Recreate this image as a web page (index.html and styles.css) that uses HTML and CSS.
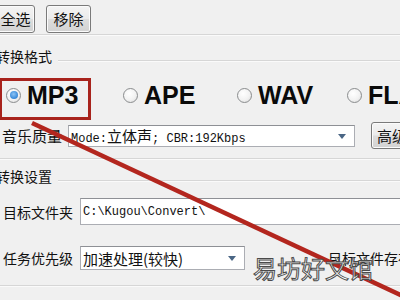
FILE: index.html
```html
<!DOCTYPE html>
<html>
<head>
<meta charset="utf-8">
<link rel="stylesheet" href="styles.css">
</head>
<body>
<div class="win">
  <div class="toolbar">
    <button class="btn btn-all">全选</button>
    <button class="btn btn-del">移除</button>
  </div>

  <div class="group">
    <div class="ghead"><span class="glabel">转换格式</span><span class="gline"></span></div>
    <div class="radios">
      <label class="radio on"><span class="circle"><span class="dot"></span></span>MP3</label>
      <label class="radio"><span class="circle"></span>APE</label>
      <label class="radio"><span class="circle"></span>WAV</label>
      <label class="radio"><span class="circle"></span>FLAC</label>
    </div>
    <div class="row row-q">
      <span class="lbl lbl-q">音乐质量</span>
      <div class="field select sel-q"><span class="mono">Mode:<span class="cjk">立体声</span>; CBR:192Kbps</span><span class="arrow"></span></div>
      <button class="btn btn-adv">高级</button>
    </div>
  </div>

  <div class="group">
    <div class="ghead ghead2"><span class="glabel">转换设置</span><span class="gline"></span></div>
    <div class="row row-dir">
      <span class="lbl">目标文件夹</span>
      <div class="field input-dir"><span class="mono">C:\Kugou\Convert\</span></div>
    </div>
    <div class="row row-pri">
      <span class="lbl">任务优先级</span>
      <div class="field select sel-pri"><span class="cjk-val">加速处理(较快)</span><span class="arrow"></span></div>
      <span class="lbl lbl-exist">目标文件存在</span>
    </div>
  </div>

  <div class="redbox"></div>
  <svg class="redline" width="400" height="300" viewBox="0 0 400 300">
    <line x1="32" y1="123" x2="420" y2="304" stroke="#b3261e" stroke-width="4.5"/>
  </svg>
  <div class="watermark">易坊好文馆</div>
</div>
</body>
</html>
```

FILE: styles.css
```css
html, body {
  margin: 0;
  padding: 0;
}
body {
  width: 400px;
  height: 300px;
  overflow: hidden;
  background: #f0f0f0;
  font-family: "Noto Sans CJK SC", "Liberation Sans", sans-serif;
  color: #111;
}
.win {
  position: relative;
  width: 400px;
  height: 300px;
  overflow: hidden;
}
.toolbar {
  height: 35px;
  display: flex;
  align-items: flex-start;
  padding-top: 5px;
  box-sizing: border-box;
  border-bottom: 1px solid #d6d6d6;
  box-shadow: 0 1px 0 #fafafa;
}
.btn {
  font-family: "Noto Sans CJK SC", sans-serif;
  font-size: 15px;
  line-height: 18px;
  color: #111;
  height: 28px;
  padding: 0;
  border: 1px solid #7a7a7a;
  border-radius: 3px;
  background: linear-gradient(#f4f4f4 0%, #ebebeb 48%, #dddddd 52%, #d2d2d2 100%);
  box-shadow: inset 0 0 0 1px #fbfbfb;
  flex: none;
}
.btn-all {
  margin-left: -16px;
  width: 51px;
  padding-left: 12px;
}
.btn-del {
  margin-left: 11px;
  width: 45px;
}
.group {
  border-bottom: 1px solid #d6d6d6;
  box-shadow: 0 1px 0 #fafafa;
}
.ghead {
  display: flex;
  height: 20px;
  margin-top: 11px;
}
.glabel {
  font-size: 14px;
  line-height: 20px;
  margin-left: -4px;
  white-space: nowrap;
}
.gline {
  flex: 1;
  align-self: flex-start;
  margin-top: 14px;
  margin-left: 6px;
  border-top: 1px solid #d6d6d6;
  box-shadow: 0 1px 0 #fafafa;
}
.radios {
  display: grid;
  grid-template-columns: 117px 114px 110px 100px;
  padding-left: 6px;
  height: 56px;
  padding-top: 2px;
  box-sizing: border-box;
  align-items: center;
}
.radio {
  display: flex;
  align-items: center;
  font-family: "Liberation Sans", Arial, sans-serif;
  font-weight: bold;
  font-size: 25px;
  line-height: 30px;
  color: #0a0a0a;
  white-space: nowrap;
}
.circle {
  width: 13px;
  height: 13px;
  border: 1px solid #8a8c8e;
  border-radius: 50%;
  background: radial-gradient(circle at 40% 35%, #ffffff 0%, #f2f2f2 55%, #d8d8d8 100%);
  margin-right: 6px;
  display: flex;
  align-items: center;
  justify-content: center;
  flex: none;
}
.dot {
  width: 8px;
  height: 8px;
  border-radius: 50%;
  background: radial-gradient(circle at 45% 40%, #8cc3f5 0%, #3f8fdc 60%, #2a74c4 100%);
}
.row {
  display: flex;
  align-items: center;
}
.row-q {
  height: 27px;
  margin-bottom: 9px;
}
.lbl {
  font-size: 14px;
  line-height: 20px;
  white-space: nowrap;
  margin-left: 3px;
  flex: none;
}
.lbl-q {
  font-size: 15px;
  margin-left: 2px;
}
.field {
  background: #ffffff;
  border: 1px solid #abadb3;
  border-top-color: #8e9095;
  box-sizing: border-box;
  display: flex;
  align-items: center;
  position: relative;
  flex: none;
}
.mono {
  font-family: "Liberation Mono", "Noto Sans CJK SC", monospace;
  font-size: 12px;
  color: #111;
  white-space: nowrap;
  padding-left: 2px;
}
.cjk {
  font-family: "Noto Sans CJK SC", sans-serif;
  font-size: 15px;
}
.sel-q {
  margin-left: 6px;
  width: 287px;
  height: 22px;
}
.arrow {
  position: absolute;
  right: 8px;
  top: 50%;
  margin-top: -2px;
  width: 0;
  height: 0;
  border-left: 4px solid transparent;
  border-right: 4px solid transparent;
  border-top: 5px solid #4a6685;
}
.btn-adv {
  margin-left: 16px;
  width: 60px;
  height: 27px;
  text-align: left;
  padding-left: 5px;
}
.ghead2 {
  margin-top: 7px;
}
.row-dir {
  margin-top: 12px;
  height: 27px;
}
.input-dir {
  margin-left: 7px;
  width: 330px;
  height: 27px;
}
.row-pri {
  margin-top: 21px;
  height: 24px;
  margin-bottom: 15px;
}
.sel-pri {
  margin-left: 7px;
  width: 165px;
  height: 24px;
}
.cjk-val {
  font-size: 15px;
  padding-left: 2px;
  white-space: nowrap;
}
.lbl-exist {
  margin-left: 83px;
  font-size: 14px;
}
.redbox {
  position: absolute;
  left: -1px;
  top: 78px;
  width: 92px;
  height: 42px;
  box-sizing: border-box;
  border: 3px solid #a8231c;
}
.redline {
  position: absolute;
  left: 0;
  top: 0;
}
.watermark {
  position: absolute;
  left: 253px;
  top: 250px;
  font-family: "Noto Sans CJK SC", sans-serif;
  font-size: 24px;
  line-height: 36px;
  color: #ffffff;
  -webkit-text-stroke: 1px #4a4a4a;
  white-space: nowrap;
}
```
